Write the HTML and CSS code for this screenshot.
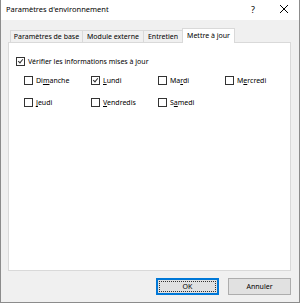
FILE: index.html
```html
<!DOCTYPE html>
<html lang="fr">
<head>
    <meta charset="UTF-8">
    <title>Paramètres d'environnement</title>
    <link rel="stylesheet" href="styles.css">
</head>
<body>
    <div class="window">
        <!-- Title bar -->
        <div class="titlebar">
            <span class="title">Paramètres d'environnement</span>
            <span class="help">?</span>
            <svg class="close" width="10" height="10" viewBox="0 0 10 10">
                <path d="M1 1 L9 9 M9 1 L1 9" stroke="#000" stroke-width="1" fill="none"/>
            </svg>
        </div>

        <div class="content">
            <!-- Tabs -->
            <div class="tabs">
                <div class="tab tab-base">Paramètres de base</div>
                <div class="tab tab-module">Module externe</div>
                <div class="tab tab-entretien">Entretien</div>
                <div class="tab tab-update active">Mettre à jour</div>
            </div>

            <div class="panel">
                <label class="check">
                    <span class="box checked"></span>
                    <span>Vérifier les informations mises à <u>j</u>our</span>
                </label>

                <div class="days">
                    <label class="check"><span class="box"></span><span>Di<u>m</u>anche</span></label>
                    <label class="check"><span class="box checked"></span><span><u>L</u>undi</span></label>
                    <label class="check"><span class="box"></span><span>Ma<u>r</u>di</span></label>
                    <label class="check"><span class="box"></span><span>M<u>e</u>rcredi</span></label>
                    <label class="check"><span class="box"></span><span><u>J</u>eudi</span></label>
                    <label class="check"><span class="box"></span><span><u>V</u>endredis</span></label>
                    <label class="check"><span class="box"></span><span>S<u>a</u>medi</span></label>
                </div>
            </div>

            <div class="buttons">
                <button class="btn default"><span>OK</span></button>
                <button class="btn">Annuler</button>
            </div>
        </div>
    </div>
</body>
</html>
```

FILE: styles.css
```css
/* General */
body {
    margin: 0;
    padding: 0;
    font-family: 'Noto Sans', sans-serif;
    font-size: 7px;
    color: #000;
    background: #fff;
}

.window {
    width: 298px;
    height: 302px;
    border: 1px solid #8c8c8c;
    border-top: none;
    background: #f0f0f0;
    display: flex;
    flex-direction: column;
}

/* Title bar */
.titlebar {
    height: 18px;
    background: #fff;
    display: flex;
    align-items: center;
    padding: 0 0 2px 5px;
}

.title {
    flex: 1;
    font-size: 7.5px;
}

.help {
    font-size: 9px;
    margin-right: 24px;
}

.close {
    margin-right: 10px;
}

/* Content */
.content {
    flex: 1;
    display: flex;
    flex-direction: column;
    padding: 8px 8px 0 7px;
}

.tabs {
    display: flex;
    align-items: flex-end;
    padding-left: 2px;
    height: 14px;
}

.tab {
    height: 11px;
    line-height: 11px;
    text-align: center;
    border: 1px solid #d9d9d9;
    border-bottom: none;
    border-right: none;
    background: #f0f0f0;
    white-space: nowrap;
}

.tab-base { width: 71px; }
.tab-module { width: 60px; }
.tab-entretien { width: 38px; }
.tab-update { width: 51px; }

.tab.active {
    height: 14px;
    line-height: 13px;
    background: #fff;
    border-right: 1px solid #d9d9d9;
    margin-bottom: -1px;
    position: relative;
    z-index: 1;
}

.panel {
    height: 213px;
    background: #fff;
    border: 1px solid #d9d9d9;
    padding: 14px 7px 0;
}

.check {
    display: flex;
    align-items: center;
    gap: 3px;
    height: 9px;
    white-space: nowrap;
}

.box {
    width: 7px;
    height: 7px;
    border: 1px solid #333;
    background: #fff;
    position: relative;
    flex: none;
}

.box.checked::after {
    content: "";
    position: absolute;
    left: 2px;
    top: 0;
    width: 2px;
    height: 4px;
    border: solid #333;
    border-width: 0 1px 1px 0;
    transform: rotate(40deg);
}

.days {
    display: grid;
    grid-template-columns: repeat(4, 67px);
    row-gap: 13px;
    margin: 10px 0 0 8px;
}

/* Buttons */
.buttons {
    display: flex;
    justify-content: flex-end;
    gap: 9px;
    margin-top: 7px;
}

.btn {
    width: 63px;
    height: 17px;
    padding: 0;
    font-family: inherit;
    font-size: 7px;
    background: #e1e1e1;
    border: 1px solid #adadad;
    color: #000;
}

.btn.default {
    border: 1px solid #0078d7;
    box-shadow: inset 0 0 0 1px #0078d7;
    display: flex;
    padding: 2px;
}

.btn.default span {
    flex: 1;
    display: flex;
    align-items: center;
    justify-content: center;
    outline: 1px dotted #333;
    outline-offset: -1px;
}
```
